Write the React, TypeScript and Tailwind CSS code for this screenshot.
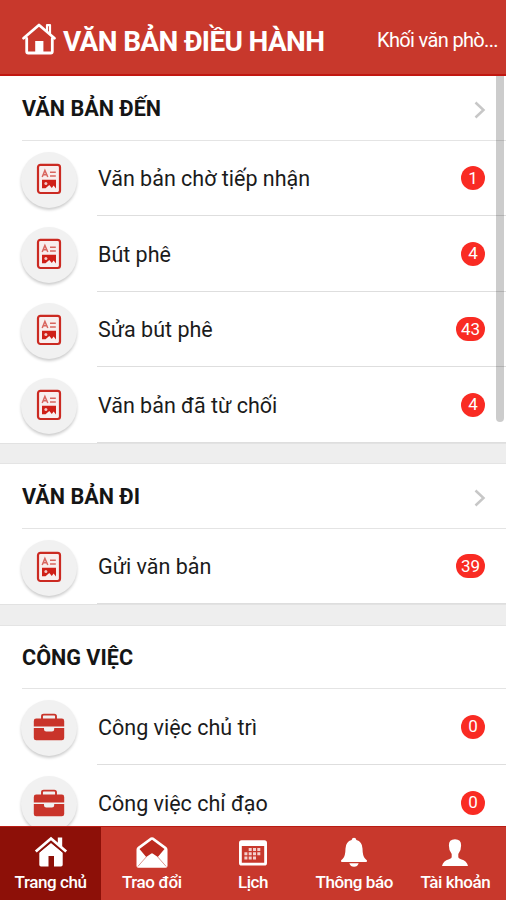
import React from "react";

const FONT = "font-[Roboto,'Noto_Sans',sans-serif]";

function HomeOutline() {
  return (
    <svg width="36" height="34" viewBox="0 0 36 34" fill="none" stroke="#fff" strokeWidth="2.8" strokeLinejoin="round" strokeLinecap="round">
      <path d="M5.7 16.5V29.5Q5.7 31 7.2 31H29.8Q31.3 31 31.3 29.5V16.5" />
      <path d="M2.5 16.2L18 3L33.5 16.2" />
      <path d="M26 8.5V3.2H29V11.5" strokeWidth="2.2" />
      <path d="M14.2 31V19H22.4V31Z" fill="#fff" stroke="none" />
    </svg>
  );
}

function DocumentIcon() {
  return (
    <svg width="26" height="32" viewBox="0 0 26 32" fill="none" stroke="#cb2a22" className="relative -top-px">
      <rect x="2" y="1.8" width="22" height="28.2" rx="2.4" strokeWidth="2.2" fill="#f8eeee" />
      <path d="M6.2 14L8.9 7.5L11.8 14M7.4 11.8H10.7" strokeWidth="1.5" stroke="#d8655f" />
      <path d="M14 9.2H19.8M14 13H19.8" strokeWidth="1.6" stroke="#d8655f" />
      <path d="M6 16.8H20V25.4L17.6 22.6L15.8 25L13.3 22L9.5 25.2H6Z" fill="#cf1f17" stroke="none" />
      <circle cx="9.9" cy="20.6" r="1.5" fill="#f3c9c7" stroke="none" />
    </svg>
  );
}

function BriefcaseIcon() {
  return (
    <svg width="32" height="28" viewBox="0 0 32 28" fill="#c9342a" className="relative -top-px">
      <path d="M9 6.5V3.3Q9 1.6 10.7 1.6H21.3Q23 1.6 23 3.3V6.5" fill="none" stroke="#c9342a" strokeWidth="1.9" />
      <path d="M3.2 5.5H28.8Q31.2 5.5 31.2 7.9V13.5H.8V7.9Q.8 5.5 3.2 5.5Z" />
      <path d="M.8 15H11V16.2Q11 18.4 13.2 18.4H19Q21.2 18.4 21.2 16.2V15H31.2V24.9Q31.2 27.3 28.8 27.3H3.2Q.8 27.3 .8 24.9Z" />
    </svg>
  );
}

function HomeIcon() {
  return (
    <svg width="34" height="32" viewBox="0 0 34 32" fill="#fff">
      <path d="M5.3 16.5L17 7L28.7 16.5V28.7Q28.7 30.5 27 30.5H20V20H14.5V30.5H7Q5.3 30.5 5.3 28.7Z" />
      <path d="M1.8 17L17 4L32.2 17" fill="none" stroke="#8d1008" strokeWidth="4" />
      <path d="M23.8 1.5H28.2V12L23.8 8Z" />
      <path d="M1.8 15.5L17 2.5L32.2 15.5" fill="none" stroke="#fff" strokeWidth="2.8" />
    </svg>
  );
}

function EnvelopeIcon() {
  return (
    <svg width="34" height="32" viewBox="0 0 34 32" fill="none">
      <path d="M1.5 13.5Q1.5 11.8 3 10.8L15.6 1.6Q17 .7 18.4 1.6L31 10.8Q32.5 11.8 32.5 13.5V30Q32.5 31.8 30.7 31.8H3.3Q1.5 31.8 1.5 30Z" fill="#fff" />
      <path d="M4.5 13L17 3.8L29.5 13L22.8 21L18 17.7Q17 17 16 17.7L11.2 21Z" fill="#bd2a1f" />
      <path d="M11.2 21L2.8 30.5M22.8 21L31.2 30.5" stroke="#d98b84" strokeWidth=".9" />
    </svg>
  );
}

function CalendarIcon() {
  return (
    <svg width="34" height="32" viewBox="0 0 34 32">
      <path fillRule="evenodd" fill="#fff" d="M5.6 4.3H28.4Q31 4.3 31 6.9V27Q31 29.6 28.4 29.6H5.6Q3 29.6 3 27V6.9Q3 4.3 5.6 4.3ZM5.8 10V26.8H28.2V10Z" />
      <g fill="#f4d0cd">
        <path d="M12.7 12h3v3h-3zM17 12h3v3h-3zM21.3 12h3v3h-3zM8.4 16.3h3v3h-3zM12.7 16.3h3v3h-3zM17 16.3h3v3h-3zM21.3 16.3h3v3h-3zM8.4 20.6h3v3h-3zM12.7 20.6h3v3h-3zM17 20.6h3v3h-3z" />
      </g>
    </svg>
  );
}

function BellIcon() {
  return (
    <svg width="34" height="32" viewBox="0 0 34 32" fill="#fff">
      <path d="M17 1.7Q19 1.7 19.4 4Q25.2 5.5 25.5 12.5Q25.6 20 28 22.5L30 24.4Q30.2 26 29 26H5Q3.8 26 4 24.4L6 22.5Q8.4 20 8.5 12.5Q8.8 5.5 14.6 4Q15 1.7 17 1.7Z" />
      <path d="M12.3 27.2H21.7Q20.5 30.8 17 30.8T12.3 27.2Z" />
    </svg>
  );
}

function PersonIcon() {
  return (
    <svg width="34" height="32" viewBox="0 0 34 32" fill="#fff">
      <path d="M17 3.2Q23.3 3.2 23.1 9.5Q23.3 14 20.3 18V21.3Q20.3 22.5 23 23.3Q29 25 30 30H4Q5 25 11 23.3Q13.7 22.5 13.7 21.3V18Q10.7 14 10.9 9.5Q10.7 3.2 17 3.2Z" />
    </svg>
  );
}

type Item = { label: string; count: number };

function Row({ item, icon, height }: { item: Item; icon: React.ReactNode; height: string }) {
  return (
    <div className={`flex ${height} shrink-0 pl-[21px]`}>
      <div className="mt-[11px] flex size-14 shrink-0 items-center justify-center rounded-full bg-[#f1f1f1] shadow-[0_2px_3px_rgba(0,0,0,0.2)]">
        {icon}
      </div>
      <div className="ml-5 flex flex-1 items-center justify-between border-b border-[#dedede] pl-px pr-[21px]">
        <span className="pt-[3px] text-[21.5px] text-[#1b1b1b]">{item.label}</span>
        <span className="flex h-6 min-w-6 items-center justify-center rounded-full bg-[#f92b23] px-[5px] text-[17px] leading-none text-white">{item.count}</span>
      </div>
    </div>
  );
}

function SectionHeader({ title, arrow, height }: { title: string; arrow?: boolean; height: string }) {
  return (
    <div className={`ml-[22px] flex ${height} shrink-0 items-center justify-between border-b border-[#e4e4e4] pr-5 pt-[3px]`}>
      <h2 className="text-[21.6px] font-bold text-[#151515]">{title}</h2>
      {arrow && (
        <svg width="12" height="18" viewBox="0 0 12 18" fill="none" stroke="#c7c7c7" strokeWidth="2.5">
          <path d="M1.5 1.5L9.5 9L1.5 16.5" />
        </svg>
      )}
    </div>
  );
}

const tabs = [
  { label: "Trang chủ", icon: <HomeIcon />, active: true },
  { label: "Trao đổi", icon: <EnvelopeIcon /> },
  { label: "Lịch", icon: <CalendarIcon /> },
  { label: "Thông báo", icon: <BellIcon /> },
  { label: "Tài khoản", icon: <PersonIcon /> },
];

export default function App() {
  return (
    <div className={`relative flex h-[900px] w-[506px] flex-col overflow-hidden bg-[#eeeeee] ${FONT}`}>
      <header className="flex h-[76px] shrink-0 items-center justify-between border-b-2 border-[#c11710] bg-[#c8382c] pl-[21px] pr-2 pt-1 text-white">
        <div className="flex items-center gap-[6px]">
          <HomeOutline />
          <h1 className="whitespace-nowrap pt-[5px] text-[28px] font-bold leading-8 tracking-[-0.66px]">VĂN BẢN ĐIỀU HÀNH</h1>
        </div>
        <span className="whitespace-nowrap pt-px text-[20px] tracking-[-0.65px]">Khối văn phò...</span>
      </header>

      <main className="flex min-h-0 flex-1 flex-col overflow-hidden">
        <section className="flex shrink-0 flex-col bg-white">
          <SectionHeader title="VĂN BẢN ĐẾN" arrow height="h-[65px]" />
          <Row item={{ label: "Văn bản chờ tiếp nhận", count: 1 }} icon={<DocumentIcon />} height="h-[75px]" />
          <Row item={{ label: "Bút phê", count: 4 }} icon={<DocumentIcon />} height="h-[76px]" />
          <Row item={{ label: "Sửa bút phê", count: 43 }} icon={<DocumentIcon />} height="h-[75px]" />
          <Row item={{ label: "Văn bản đã từ chối", count: 4 }} icon={<DocumentIcon />} height="h-[76px]" />
        </section>
        <div className="h-[21px] shrink-0 border-y border-t-[#e2e2e2] border-b-[#e4e4e4]" />
        <section className="flex shrink-0 flex-col bg-white">
          <SectionHeader title="VĂN BẢN ĐI" arrow height="h-[65px]" />
          <Row item={{ label: "Gửi văn bản", count: 39 }} icon={<DocumentIcon />} height="h-[75px]" />
        </section>
        <div className="h-[22px] shrink-0 border-y border-t-[#e2e2e2] border-b-[#e4e4e4]" />
        <section className="flex shrink-0 flex-col bg-white">
          <SectionHeader title="CÔNG VIỆC" height="h-[63px]" />
          <Row item={{ label: "Công việc chủ trì", count: 0 }} icon={<BriefcaseIcon />} height="h-[76px]" />
          <Row item={{ label: "Công việc chỉ đạo", count: 0 }} icon={<BriefcaseIcon />} height="h-[76px]" />
        </section>
      </main>

      <nav className="grid h-[74px] shrink-0 grid-cols-5 border-t border-[#b91c14] bg-[#c8382c] text-white">
        {tabs.map((tab) => (
          <div key={tab.label} className={`flex flex-col items-center pt-[9px] ${tab.active ? "bg-[#8d1008]" : ""}`}>
            {tab.icon}
            <span className="mt-[2px] whitespace-nowrap text-[17px] font-medium leading-6 tracking-[-0.4px]">{tab.label}</span>
          </div>
        ))}
      </nav>

      <div className="absolute right-[2px] top-[76px] h-[346px] w-2 rounded-b-full bg-black/20" />
    </div>
  );
}
